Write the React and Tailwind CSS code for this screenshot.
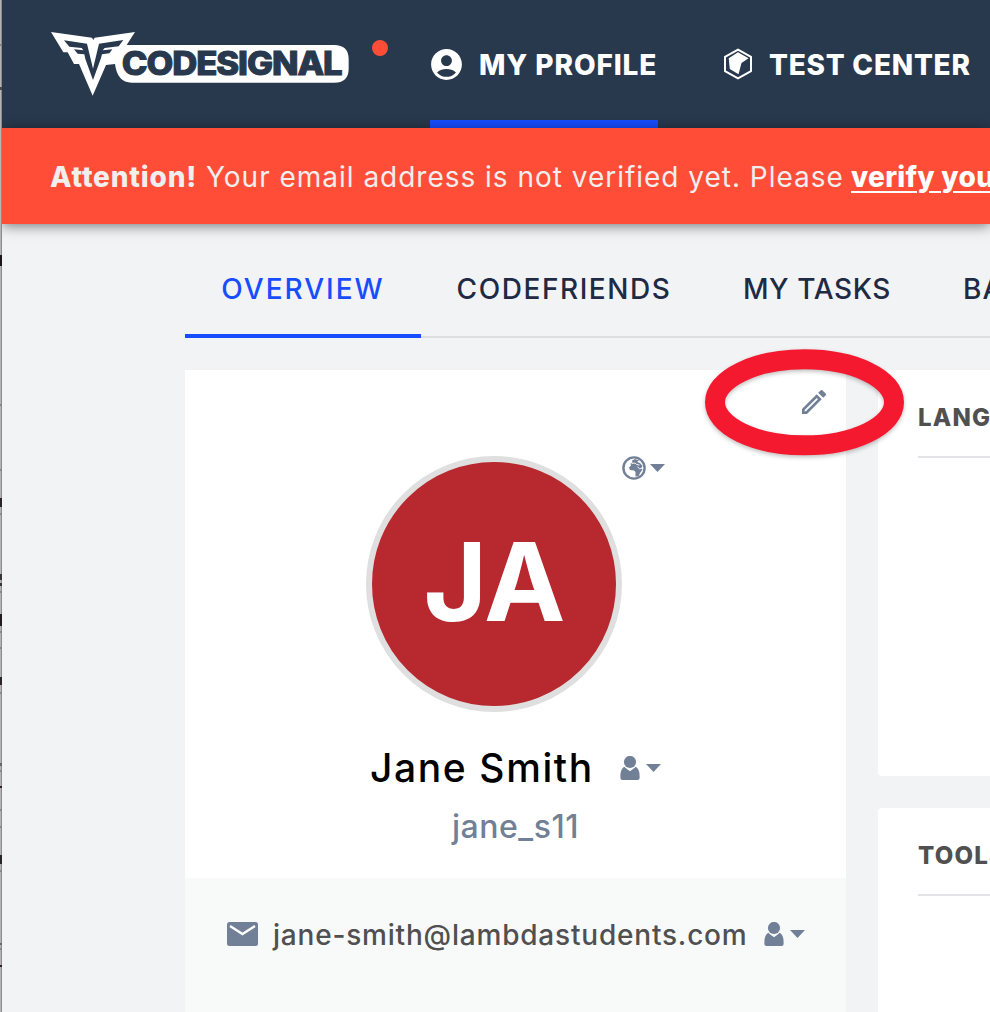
import { MdAccountCircle, MdOutlineEdit } from "react-icons/md";

const marks = [
  { y: 44, h: 2, c: "#858585" },
  { y: 87, h: 3, c: "#4b4b4b" },
  { y: 255, h: 11, c: "#1c1716" },
  { y: 404, h: 2, c: "#858585" },
  { y: 469, h: 2, c: "#8a8784" },
  { y: 498, h: 9, c: "#2b2626" },
  { y: 513, h: 2, c: "#8a8784" },
  { y: 574, h: 6, c: "#3a3534" },
  { y: 583, h: 3, c: "#3a3534" },
  { y: 591, h: 2, c: "#8a8784" },
  { y: 614, h: 12, c: "#231d1d" },
  { y: 631, h: 2, c: "#858585" },
  { y: 647, h: 2, c: "#858585" },
  { y: 677, h: 8, c: "#2b2626" },
  { y: 692, h: 2, c: "#8a8784" },
  { y: 763, h: 3, c: "#6a6666" },
  { y: 770, h: 2, c: "#8a8784" },
  { y: 786, h: 2, c: "#2b2020" },
  { y: 809, h: 2, c: "#8a8784" },
  { y: 826, h: 2, c: "#8a8784" },
  { y: 855, h: 9, c: "#2b2626" },
  { y: 870, h: 2, c: "#8a8784" },
  { y: 943, h: 2, c: "#6a6666" },
  { y: 948, h: 2, c: "#8a8784" },
  { y: 965, h: 2, c: "#2b2020" },
];

function Logo() {
  return (
    <svg className="block h-[100px] w-[370px] shrink-0" viewBox="0 0 1110 300">
      <path
        fill="#fff"
        d="M63 66L186 83L190 90L194 83L315 66L290 105H912Q956 105 956 148V176Q956 218 912 218H305Q262 218 255 162L228 165L188 257L147 162H132L113 127H100Z"
      />
      <path
        fill="#28384d"
        d="M102 91L171 101L189 176L207 101L280 90L266 109L224 114L218 121L247 118L238 130L216 133L212 147L189 210L166 147L163 133L143 131L132 118L160 121L155 114L118 110Z"
      />
      <text
        x="275"
        y="196"
        textLength="660"
        lengthAdjust="spacingAndGlyphs"
        fill="#28384d"
        stroke="#28384d"
        strokeWidth="3"
        className="font-['Inter'] text-[97px] font-extrabold tracking-[-3px]"
      >
        CODESIGNAL
      </text>
      <circle cx="1050" cy="114" r="24" fill="#ff4d38" />
    </svg>
  );
}

function TestIcon() {
  return (
    <svg className="block h-8 w-8 shrink-0" viewBox="0 0 32 32">
      <path d="M16 1.6L29 8.8V23.2L16 30.4L3 23.2V8.8Z" fill="none" stroke="#fff" strokeWidth="2" strokeLinejoin="round" />
      <path d="M16 4.2L26.5 10.2L19.5 15L16.5 26.3L7.8 21L6.7 10.2Z" fill="#fff" />
    </svg>
  );
}

function Caret() {
  return (
    <svg className="block h-2 w-[15px] shrink-0" viewBox="0 0 15 8">
      <path d="M0 0H15L7.5 8Z" fill="#718096" />
    </svg>
  );
}

function Person() {
  return (
    <svg className="block h-6 w-5 shrink-0" viewBox="0 0 20 24">
      <circle cx="10" cy="6" r="6.1" fill="#718096" />
      <path d="M4.2 10.8Q7 13.4 10 15.2Q13 13.4 15.8 10.8Q19.6 13 19.6 20V22Q19.6 24 17.6 24H2.4Q.4 24 .4 22V20Q.4 13 4.2 10.8Z" fill="#718096" />
    </svg>
  );
}

function Globe() {
  return (
    <svg className="block h-6 w-6 shrink-0" viewBox="0 0 24 24">
      <circle cx="12" cy="12" r="10.6" fill="none" stroke="#718096" strokeWidth="2.4" />
      <path d="M10 4.5L13 3L17 4.5L15 6L18 7L20.5 10L19 12.5L20.5 13.5L18 17L16.5 20.5L13.5 20.5L13.5 16L12 14.5L8 14L7 11.5L9 9.4L8.5 7.5L10.5 6.5Z" fill="#718096" />
      <path d="M9.6 7.6L13 7L14.5 8.4L17.5 9M15.5 10.6L17.5 12.9L19.2 12.4" fill="none" stroke="#fff" strokeWidth="0.9" />
    </svg>
  );
}

function SideCard({ title, className }) {
  return (
    <section className={"w-[112px] overflow-hidden rounded-l bg-white pl-10 " + className}>
      <h2 className="h-[88px] border-b-2 border-[#e2e4e8] pt-8 text-2xl font-extrabold leading-8 tracking-[1.2px] text-[#505050]">
        {title}
      </h2>
    </section>
  );
}

export default function App() {
  return (
    <div className="relative flex h-[1012px] w-[990px] overflow-hidden bg-[#f2f3f5] font-['Inter',sans-serif]">
      <div className="relative w-0.5 shrink-0 border-r border-[#8c8c8c] bg-[#b4b4b4]">
        {marks.map((m) => (
          <i key={m.y} className="absolute left-0 w-0.5" style={{ top: m.y, height: m.h, background: m.c }} />
        ))}
      </div>
      <div className="flex w-[988px] shrink-0 flex-col overflow-hidden whitespace-nowrap">
        <header className="flex h-32 shrink-0 bg-[#28384d] text-[28px] font-extrabold text-white">
          <div className="w-[428px] shrink-0 pl-7 pt-2.5">
            <Logo />
          </div>
          <a className="flex w-[228px] shrink-0 items-center border-b-8 border-[#184dff] pt-2">
            <MdAccountCircle className="-ml-0.5 size-[37px] shrink-0" />
            <span className="ml-3.5 pt-0.5 tracking-[0.9px]">MY PROFILE</span>
          </a>
          <a className="ml-16 flex shrink-0 items-center">
            <TestIcon />
            <span className="ml-[15px] pt-0.5 tracking-[0.75px]">TEST CENTER</span>
          </a>
        </header>
        <div className="relative flex h-24 shrink-0 items-center bg-[#ff4d38] pl-12 pt-px text-[28px] text-[#f1eeee] shadow-[0_2px_12px_rgba(0,0,0,0.5)]">
          <b className="w-[156px] shrink-0 font-extrabold tracking-[0.8px]">Attention!</b>
          <span className="w-[645px] shrink-0 tracking-[0.98px]">Your email address is not verified yet. Please</span>
          <a className="shrink-0 font-extrabold tracking-[0.3px] text-white underline decoration-2 underline-offset-4">verify your</a>
        </div>
        <nav className="ml-[183px] flex h-[114px] shrink-0 border-b-2 border-[#dcdee2] text-[28px] font-medium text-[#1f2a44]">
          <a className="-mb-0.5 flex w-[236px] shrink-0 items-center justify-center border-b-4 border-[#184dff] pt-5 tracking-[2px] text-[#184dff]">OVERVIEW</a>
          <a className="flex w-[286px] shrink-0 items-center justify-center pt-[18px] tracking-[1.55px]">CODEFRIENDS</a>
          <a className="flex w-[220px] shrink-0 items-center justify-center pt-[18px] tracking-[0.6px]">MY TASKS</a>
          <a className="flex shrink-0 items-center pl-9 pt-[18px] tracking-[1px]">BADGES</a>
        </nav>
        <main className="ml-[183px] mt-8 flex gap-8">
          <section className="flex h-[642px] w-[661px] shrink-0 flex-col bg-white">
            <div className="flex h-[70px] shrink-0 justify-end pr-4 pt-4">
              <MdOutlineEdit className="size-8 text-[#718096]" />
            </div>
            <div className="flex h-[272px] shrink-0 pl-[181px] pt-4">
              <div className="flex size-64 items-center justify-center rounded-full border-6 border-[#dfdfdf] bg-[#b7282f] text-[109px] font-bold text-white">
                <span className="-mt-1 tracking-[-1px]">JA</span>
              </div>
              <div className="flex h-6 items-center gap-1">
                <Globe />
                <Caret />
              </div>
            </div>
            <div className="mt-8 flex h-12 shrink-0 items-center pl-[185px]">
              <h1 className="w-[250px] text-[39px] font-medium tracking-[1.6px] text-black">Jane Smith</h1>
              <Person />
              <span className="ml-1.5"><Caret /></span>
            </div>
            <div className="h-[86px] shrink-0 pt-[11px] text-center text-[32px] font-medium leading-[48px] tracking-[0.5px] text-[#718096]">jane_s11</div>
            <div className="flex flex-1 items-start bg-[#f8f9f9] pl-[42px] pt-10">
              <svg className="mt-1 h-6 w-[31px] shrink-0" viewBox="0 0 31 24">
                <rect width="31" height="24" rx="2.5" fill="#718096" />
                <path d="M3 4L15.5 12L28 4" fill="none" stroke="#fff" strokeWidth="2.4" />
              </svg>
              <span className="ml-[15px] w-[491px] pt-px text-[28px] font-medium leading-8 tracking-[0.8px] text-[#505050]">jane-smith@lambdastudents.com</span>
              <div className="mt-1 flex items-center gap-1.5">
                <Person />
                <Caret />
              </div>
            </div>
          </section>
          <div className="flex shrink-0 flex-col gap-8">
            <SideCard title="LANGUAGES" className="h-[406px]" />
            <SideCard title="TOOLS" className="h-[240px]" />
          </div>
        </main>
      </div>
      <svg className="absolute left-[695px] top-[340px] h-[130px] w-[220px] drop-shadow-[0_2px_2px_rgba(0,0,0,0.25)]" viewBox="0 0 220 130">
        <ellipse cx="109.5" cy="62.3" rx="89.5" ry="43" fill="none" stroke="#f5192f" strokeWidth="20" />
      </svg>
    </div>
  );
}
